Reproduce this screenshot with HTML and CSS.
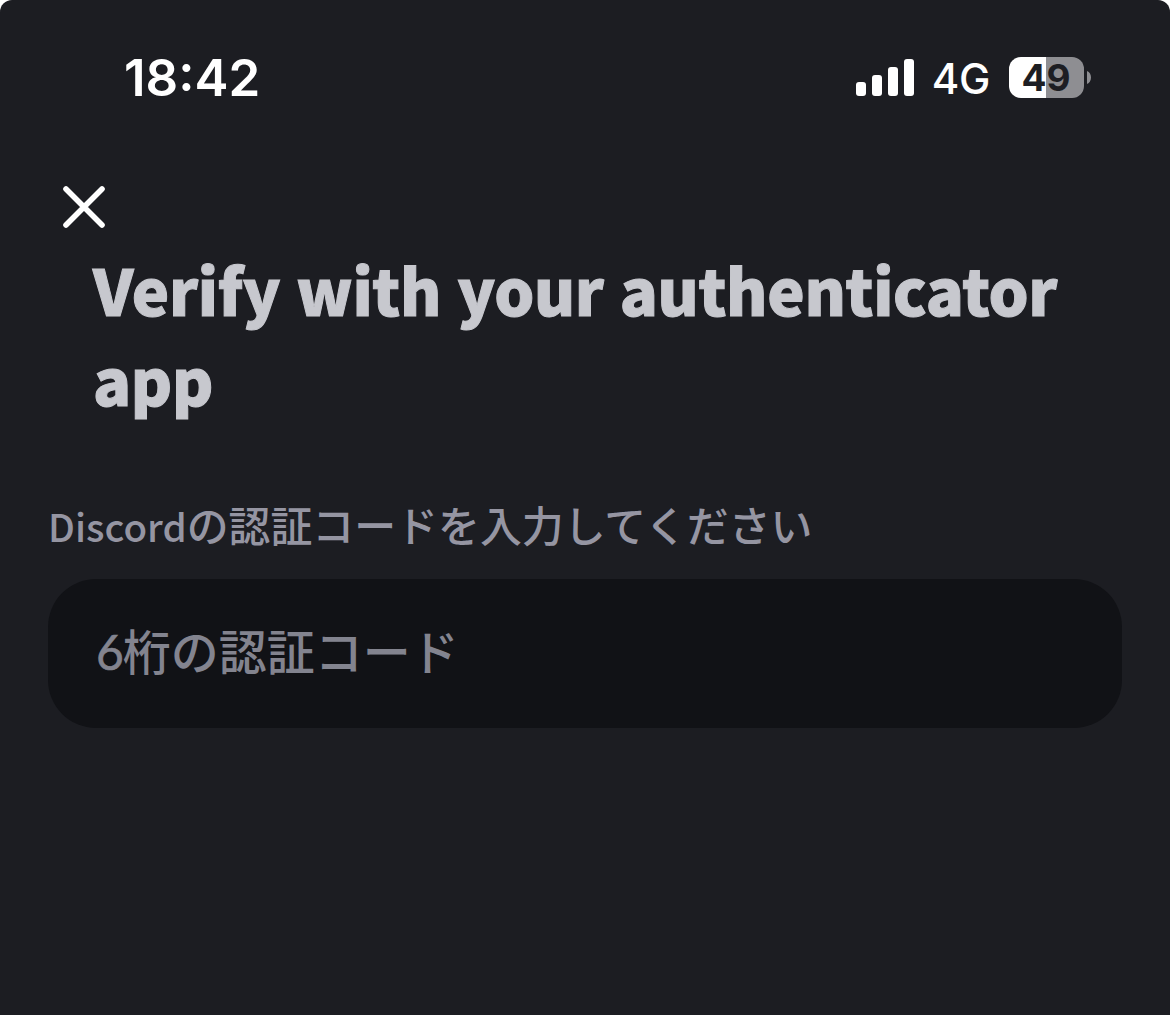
FILE: index.html
```html
<!DOCTYPE html>
<html lang="ja">
<head>
    <meta charset="UTF-8">
    <meta name="viewport" content="width=device-width, initial-scale=1.0">
    <title>認証コード</title>
    <link rel="stylesheet" href="styles.css">
</head>
<body>
    <div class="screen">
        <div class="status-bar">
            <div class="time">18:42</div>
            <div class="status-icons">
                <svg class="signal" width="58" height="37" viewBox="0 0 58 37" fill="#fff">
                    <rect x="0" y="23" width="10" height="14" rx="3"/>
                    <rect x="16" y="16" width="10" height="21" rx="3"/>
                    <rect x="32" y="8" width="10" height="29" rx="3"/>
                    <rect x="48" y="0" width="10" height="37" rx="3"/>
                </svg>
                <div class="network">4G</div>
                <div class="battery">49</div>
                <svg class="battery-tip" width="4" height="13" viewBox="0 0 4 13">
                    <path d="M0 0C2.6 1.2 4 3.6 4 6.5S2.6 11.8 0 13Z" fill="#8e8e92"/>
                </svg>
            </div>
        </div>

        <button class="close-btn" aria-label="閉じる">
            <svg width="44" height="44" viewBox="0 0 44 44" stroke="#fff" stroke-width="5.6" stroke-linecap="round">
                <path d="M4 4L40 40M40 4L4 40"/>
            </svg>
        </button>

        <h1>Verify with your authenticator app</h1>

        <div class="input-group">
            <label for="code"><span class="latin">Discord</span>の認証コードを入力してください</label>
            <div class="code-input" id="code"><span class="digit">6</span>桁の認証コード</div>
        </div>
    </div>
</body>
</html>
```
FILE: styles.css
```css
body {
    margin: 0;
    background-color: #fff;
    font-family: 'Noto Sans CJK JP', sans-serif;
}

.screen {
    height: 1015px;
    box-sizing: border-box;
    padding: 48px 48px 0;
    border-radius: 12px 12px 0 0;
    background-color: #1c1d22;
    overflow: hidden;
}

.status-bar {
    display: flex;
    align-items: center;
    justify-content: space-between;
    height: 60px;
    padding: 0 31px 0 76px;
    font-family: Inter, sans-serif;
    color: #fff;
}

.time {
    font-size: 51px;
    font-weight: 600;
    line-height: 60px;
}

.status-icons {
    display: flex;
    align-items: center;
    margin-top: -2px;
}

.network {
    margin: 4px 19px 0 18px;
    font-size: 42px;
    font-weight: 500;
    letter-spacing: -0.4px;
    line-height: 60px;
}

.battery {
    width: 75px;
    height: 41px;
    border-radius: 12px;
    background: linear-gradient(to right, #fff 37px, #8e8e92 37px);
    color: #1d1e23;
    font-size: 37px;
    font-weight: 700;
    line-height: 42px;
    text-align: center;
    text-indent: -1px;
}

.battery-tip {
    margin-left: 3px;
}

.close-btn {
    display: block;
    margin: 77px 0 0 14px;
    padding: 0;
    border: none;
    background: none;
}

.close-btn svg {
    display: block;
}

h1 {
    margin: 15px 0 0 45px;
    color: #c7c8ce;
    font-size: 63px;
    font-weight: 900;
    letter-spacing: -0.35px;
    word-spacing: 2px;
    line-height: 90px;
    -webkit-text-stroke: 1px #c7c8ce;
}

.input-group {
    margin-top: 70px;
}

label {
    display: block;
    color: #9595a2;
    font-size: 41.9px;
    font-weight: 500;
    line-height: 60px;
    white-space: nowrap;
}

.latin {
    font-size: 38.5px;
}

.code-input {
    height: 149px;
    margin-top: 24px;
    padding: 0 48px;
    border-radius: 48px;
    background-color: #111216;
    color: #83848f;
    font-size: 48px;
    font-weight: 500;
    line-height: 140px;
}

.digit {
    margin-right: -1px;
    font-family: Lato, sans-serif;
    font-weight: 400;
    -webkit-text-stroke: 0.6px #83848f;
}
```
